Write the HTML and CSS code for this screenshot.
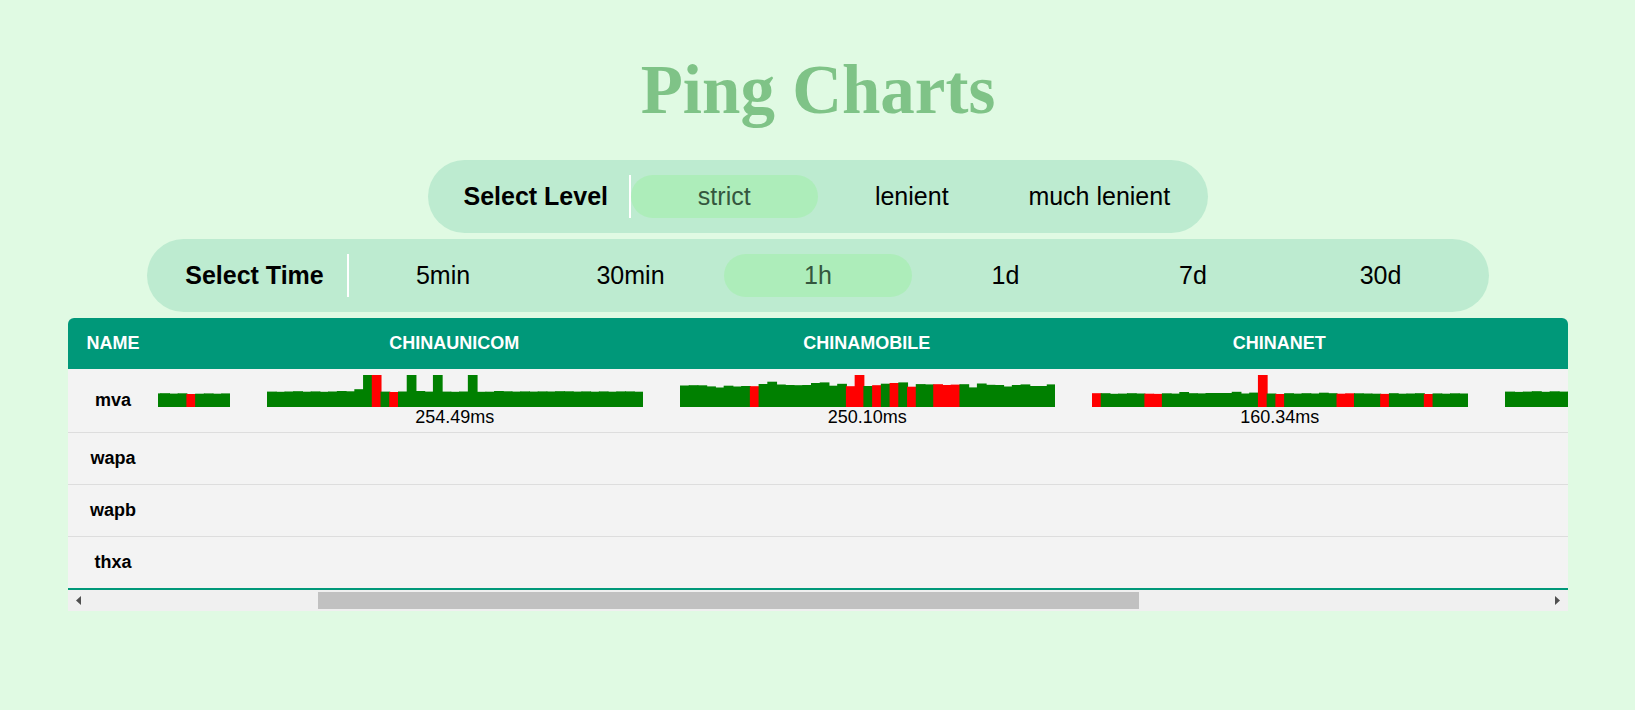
FILE: index.html
```html
<!DOCTYPE html>
<html lang="en">
<head>
<meta charset="utf-8">
<title>Ping Charts</title>
<link rel="stylesheet" href="styles.css">
</head>
<body>
<main class="page">
  <h1 class="title">Ping Charts</h1>

  <div class="picker picker-level" role="radiogroup" aria-labelledby="level-name">
    <span class="picker-name" id="level-name">Select Level</span>
    <label class="option"><input type="radio" name="level" checked><span>strict</span></label>
    <label class="option"><input type="radio" name="level"><span>lenient</span></label>
    <label class="option"><input type="radio" name="level"><span>much lenient</span></label>
  </div>

  <div class="picker picker-time" role="radiogroup" aria-labelledby="time-name">
    <span class="picker-name" id="time-name">Select Time</span>
    <label class="option"><input type="radio" name="time"><span>5min</span></label>
    <label class="option"><input type="radio" name="time"><span>30min</span></label>
    <label class="option"><input type="radio" name="time" checked><span>1h</span></label>
    <label class="option"><input type="radio" name="time"><span>1d</span></label>
    <label class="option"><input type="radio" name="time"><span>7d</span></label>
    <label class="option"><input type="radio" name="time"><span>30d</span></label>
  </div>

  <section class="panel">
    <table class="pings">
      <colgroup>
        <col class="col-name"><col class="col-cut"><col class="col-chart"><col class="col-chart"><col class="col-chart"><col>
      </colgroup>
      <thead>
        <tr><th scope="col">NAME</th><th></th><th scope="col">CHINAUNICOM</th><th scope="col">CHINAMOBILE</th><th scope="col">CHINANET</th><th></th></tr>
      </thead>
      <tbody>
        <tr class="filled">
          <th scope="row">mva</th>
          <td class="cut-left"><svg class="chart" viewBox="303 0 72 32" preserveAspectRatio="none" data-offset="34" data-bars="13.6 13.8 13.4 13.7 r13 13.3 13.6 13.3 13.6"></svg></td>
          <td><svg class="chart" viewBox="0 0 375 32" preserveAspectRatio="none" data-bars="15.4 15.2 15.5 15.8 15.3 15.6 15.2 15.5 16 15.7 17.8 32 r32 15.4 r15 15.5 32 16 15.4 32 15.4 15.2 15.5 32 15.2 15.3 16 15.7 15.4 15.6 15.4 15.6 15.5 15.8 15.7 15.4 15.6 15.3 15.6 15.3 15.6 15.6 15.3"></svg><div class="delay">254.49ms</div></td>
          <td><svg class="chart" viewBox="0 0 375 32" preserveAspectRatio="none" data-bars="21.5 21.8 21.7 20.6 19.5 21.3 20.5 21 r20.8 23 25.3 22.5 22 21.8 22 24 24.6 21.3 23.2 r20.8 r32 21 r21.8 23.3 r24 24.6 r20.3 22.9 22.6 r22.8 r22 r22.4 22.8 19.6 23.5 22.2 22 20.5 22 22.6 21 21 22.6"></svg><div class="delay">250.10ms</div></td>
          <td><svg class="chart" viewBox="0 0 375 32" preserveAspectRatio="none" data-bars="r13.8 13.8 13.2 13.4 13.8 13.5 r13.3 r13.1 13.7 13.4 15 13.8 13.6 14 14 14 15.2 13.5 14.4 r32 13.5 r13 13.8 13.4 13.8 13.5 14.3 13.8 r13.3 r13.7 13.7 13.5 13.3 r13.1 13.8 13.3 13.5 13.8 r13 13.6 13.3 13.7 13.5"></svg><div class="delay">160.34ms</div></td>
          <td class="cut-right"><svg class="chart" viewBox="0 0 62 32" preserveAspectRatio="none" data-bars="15.4 15.1 15.4 15.8 15.2 15.7 15.4 15.2"></svg></td>
        </tr>
        <tr><th scope="row">wapa</th><td></td><td></td><td></td><td></td><td></td></tr>
        <tr><th scope="row">wapb</th><td></td><td></td><td></td><td></td><td></td></tr>
        <tr><th scope="row">thxa</th><td></td><td></td><td></td><td></td><td></td></tr>
      </tbody>
    </table>
    <div class="scrollbar">
      <button class="arrow" type="button" aria-label="Scroll left"><svg width="5" height="9" viewBox="0 0 5 9"><path d="M5 0v9L0 4.500z" fill="#505050"/></svg></button>
      <div class="track"><div class="thumb"></div></div>
      <button class="arrow" type="button" aria-label="Scroll right"><svg width="5" height="9" viewBox="0 0 5 9"><path d="M0 0v9l5-4.500z" fill="#505050"/></svg></button>
    </div>
  </section>
</main>
<script src="charts.js"></script>
</body>
</html>
```
FILE: styles.css
```css
* { box-sizing: border-box; }

body {
  margin: 0;
  background: #e0fae3;
  color: #000;
  font-family: "Liberation Sans", Arial, sans-serif;
}

.page {
  display: flex;
  flex-direction: column;
  align-items: center;
  gap: 6px;
  padding: 40px 67px 0 68px;
}

.title {
  margin: 0 0 14px;
  color: #7fc387;
  font-family: "Liberation Serif", serif;
  font-size: 69px;
  font-weight: bold;
  line-height: 100px;
}

.picker {
  display: grid;
  grid-auto-columns: minmax(0, 1fr);
  grid-auto-flow: column;
  padding: 15px;
  border-radius: 37px;
  background: #bdebd0;
  font-size: 25px;
  line-height: 43px;
  text-align: center;
  white-space: nowrap;
}

.picker-level { width: 52%; }
.picker-time { width: 89.5%; }

.picker-name {
  border-right: 2px solid #fff;
  font-weight: bold;
}

.option {
  position: relative;
  cursor: pointer;
}

.option input {
  position: absolute;
  inset: 0;
  width: 100%;
  height: 100%;
  margin: 0;
  border-radius: 22px;
  appearance: none;
  cursor: pointer;
}

.option input:checked { background: #adedba; }
.option span { position: relative; pointer-events: none; }
.option input:checked + span { color: #34563e; }

.panel {
  width: 100%;
  overflow: hidden;
  border-radius: 6px 6px 0 0;
}

.pings {
  width: 100%;
  border-spacing: 0;
  border-bottom: 2px solid #009879;
  table-layout: fixed;
  background: #f3f3f3;
  font-size: 18px;
  line-height: 20px;
  text-align: center;
}

.col-name { width: 6%; }
.col-cut { width: 6%; }
.col-chart { width: 27.5%; }

.pings td { padding: 0; }
.pings th { padding: 0 0 2px; }

.pings thead th {
  height: 51px;
  background: #009879;
  color: #fff;
}

.pings tbody th, .pings tbody td {
  height: 52px;
  border-bottom: 1px solid #ddd;
}

.pings tbody tr:last-child > * {
  height: 51px;
  border-bottom: 0;
}

.pings .filled td {
  height: 64px;
  padding: 6px 18px 5px 19px;
  vertical-align: top;
}

.pings .filled .cut-left { padding-left: 0; }
.pings .filled .cut-right { padding-right: 0; }

.chart {
  display: block;
  width: 100%;
  height: 32px;
}

.bar { fill: #008000; }
.bar-loss { fill: #f00; }

.scrollbar {
  display: flex;
  height: 21px;
  padding: 2px 0;
  background: #f0f0f0;
}

.arrow {
  display: flex;
  align-items: center;
  justify-content: center;
  width: 21px;
  padding: 0;
  border: 0;
  background: none;
}

.arrow svg { flex: none; }

.track { flex: 1; }

.thumb {
  width: 56.3%;
  height: 17px;
  margin-left: 15.7%;
  background: #c1c1c1;
}
```
FILE: charts.js
```js
const STEP = 375 / 43;
const HEIGHT = 32;

document.querySelectorAll(".chart").forEach((chart) => {
  const offset = Number(chart.dataset.offset || 0);
  chart.dataset.bars.split(" ").forEach((entry, i) => {
    const loss = entry.startsWith("r");
    const value = Number(entry.replace("r", ""));
    const bar = document.createElementNS("http://www.w3.org/2000/svg", "rect");
    bar.setAttribute("class", loss ? "bar-loss" : "bar");
    bar.setAttribute("x", (offset + i) * STEP);
    bar.setAttribute("y", HEIGHT - value);
    bar.setAttribute("width", STEP + 1);
    bar.setAttribute("height", value);
    chart.appendChild(bar);
  });
});
```
